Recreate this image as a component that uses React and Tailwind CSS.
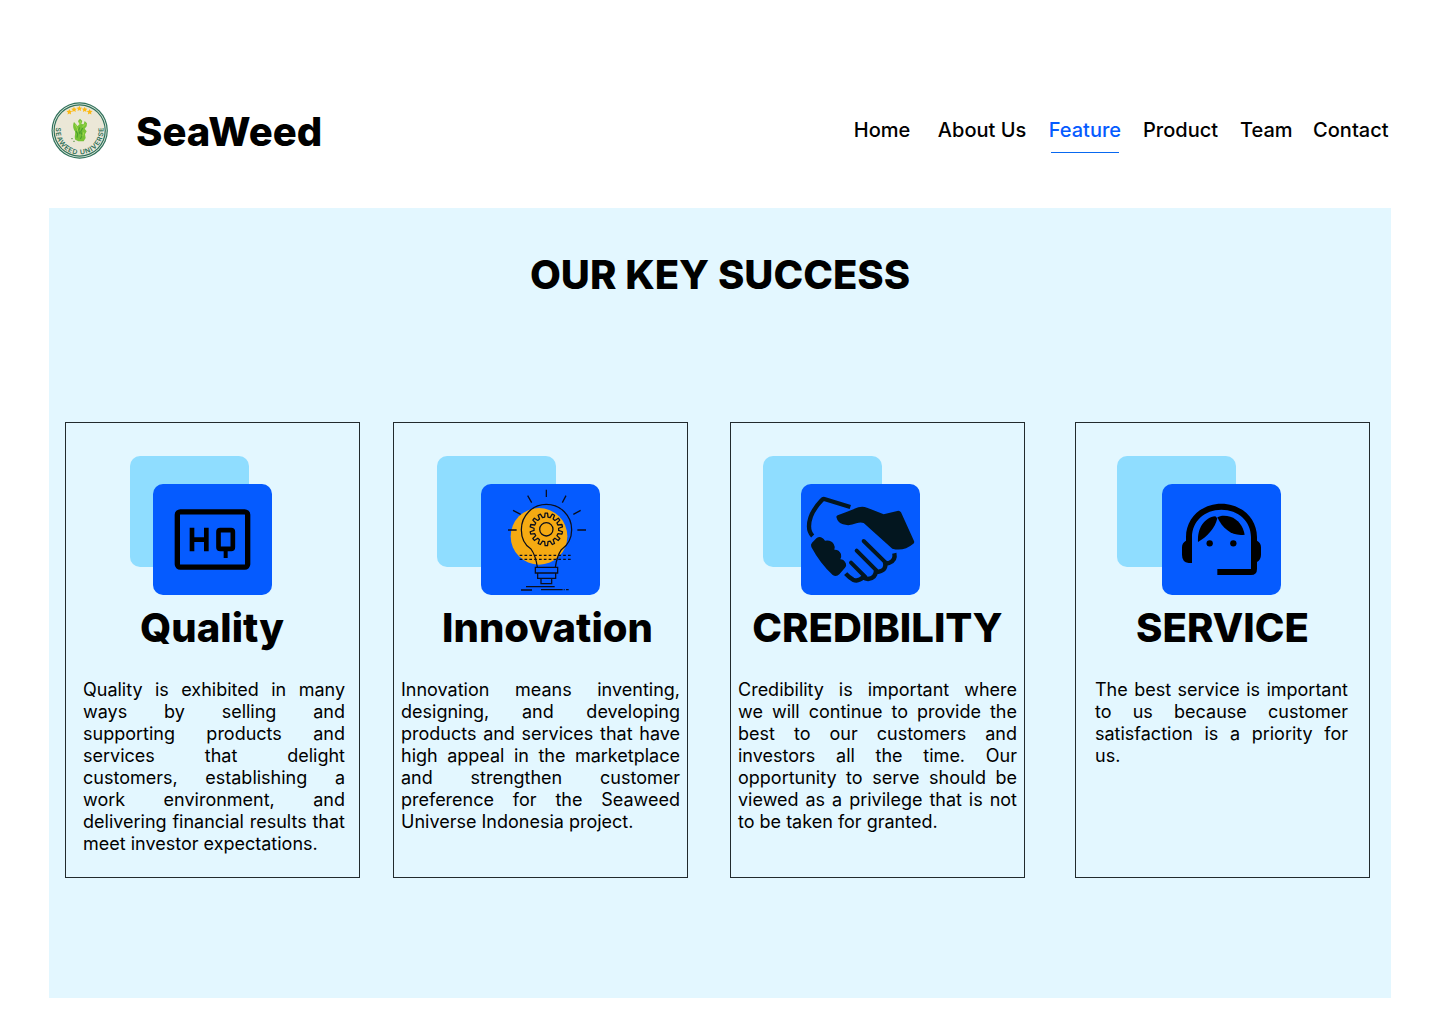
import React from "react";

const NAV = [
  { label: "Home", spacing: "ml-0" },
  { label: "About Us", spacing: "ml-[27.5px]" },
  { label: "Feature", spacing: "ml-[22.5px]", active: true },
  { label: "Product", spacing: "ml-[22px]" },
  { label: "Team", spacing: "ml-[22px]" },
  { label: "Contact", spacing: "ml-[20.5px]" },
];

function star(cx, cy, r) {
  return Array.from({ length: 10 }, (_, i) => {
    const a = -Math.PI / 2 + (i * Math.PI) / 5;
    const q = i % 2 ? r * 0.48 : r;
    return `${(cx + q * Math.cos(a)).toFixed(1)},${(cy + q * Math.sin(a)).toFixed(1)}`;
  }).join(" ");
}

function gear(cx, cy, outer, inner, teeth) {
  const pts = [];
  for (let i = 0; i < teeth; i++) {
    const base = -Math.PI / 2 + (i * 2 * Math.PI) / teeth;
    const step = (2 * Math.PI) / teeth;
    [[-0.3, inner], [-0.17, outer], [0.17, outer], [0.3, inner]].forEach(([o, r]) => {
      const a = base + o * step;
      pts.push(`${(cx + r * Math.cos(a)).toFixed(1)},${(cy + r * Math.sin(a)).toFixed(1)}`);
    });
  }
  return pts.join(" ");
}

function Logo() {
  return (
    <svg className="h-[60px] w-[60px] shrink-0" viewBox="30 27 180 180">
      <circle cx="119" cy="115.500" r="84.500" fill="#2e7059" />
      <circle cx="119" cy="115.500" r="81" fill="#e9eee4" />
      <circle cx="119" cy="115.500" r="78.500" fill="#2e7059" />
      <circle cx="119" cy="115.500" r="75" fill="#ebe7d7" />
      {[[88, 60], [102, 53], [118, 50], [134, 53], [149, 60]].map(([x, y]) => (
        <polygon key={x} points={star(x, y, 9)} fill="#fcb913" />
      ))}
      <path
        d="M106 143C102 133 107 128 105 118C100 111 97 101 102 90L108 97L113 103L118 96L114 87L120 80L127 87L124 96L131 97L134 87L141 94L140 103L134 110L140 118L135 127L137 138L131 148L115 148Z"
        fill="#78c236"
      />
      <path d="M111 137L113 126L108 117M121 141L127 130L122 119L128 108M119 106L116 115L120 126" fill="none" stroke="#4ca02d" strokeWidth="3.500" />
      <path d="M106 98L112 110L114 119M121 87L119 99M137 96L127 105M131 121L128 133" fill="none" stroke="#a6dc4d" strokeWidth="3" />
      <path d="M94 140h4M100 148h4" stroke="#4a8a39" strokeWidth="3" />
      <path id="seal-arc" d="M48.200 106A71.500 71.500 0 1 0 189.800 106" fill="none" />
      <text fill="#2e6f58" fontSize="20.500" fontWeight="600" fontFamily="Inter, sans-serif">
        <textPath href="#seal-arc" textLength="243" lengthAdjust="spacing">SEAWEED UNIVERSE</textPath>
      </text>
    </svg>
  );
}

function QualityIcon() {
  return (
    <svg className="h-full w-full" viewBox="84 102 357 333" fill="none" stroke="#000">
      <rect x="157" y="185.500" width="211" height="166" rx="9" strokeWidth="16" />
      <path d="M201 233V304M244 233V304M201 269H244" strokeWidth="14" />
      <rect x="280.500" y="240.500" width="43" height="56" rx="5" strokeWidth="14" />
      <path d="M302 300V324" strokeWidth="12" />
    </svg>
  );
}

function InnovationIcon() {
  return (
    <svg className="h-full w-full" viewBox="18 12 357 333" fill="none" stroke="#0b0e1c" strokeWidth="3.800">
      <circle cx="192" cy="169" r="85" fill="#f5aa12" stroke="none" />
      <path d="M214 29V51M158 47L170 68M273 47L262 68M114 91L137 103M317 91L295 103M99 150H125M307 150H333" />
      <path d="M187 262C184 240 178 221 168 207C148 194 139 171 139 149C139 107 173 73 214 73C256 73 290 107 290 149C290 174 279 195 259 209C250 222 244 241 241 262" />
      <polygon points={gear(214, 148, 49, 37, 14)} strokeLinejoin="round" />
      <circle cx="214" cy="148" r="20" />
      <path d="M134 226H291M134 238H291" strokeDasharray="8 6.500" />
      <path d="M181 262H248V279H181ZM188 279H242V295H188ZM198 295H230V311H198Z" />
      <path d="M153 320H239M138 330H171M198 329H263M266 329H269M273 329H281" />
    </svg>
  );
}

function CredibilityIcon() {
  return (
    <svg className="h-full w-full" viewBox="18 12 357 333" fill="none" stroke="#03161f">
      <path
        d="M128 106Q160 94 190 82Q203 78 216 83L266 103L310 92Q315 92 318 97L357 183Q359 188 355 191Q325 216 292 206L206 129Q196 126 184 130Q163 139 144 133Q128 128 124 111Q124 108 128 106Z"
        fill="#03161f"
        stroke="none"
      />
      <path d="M166 81L88 57Q84 56 80 61C54 88 42 112 42 139Q42 157 53 168" strokeWidth="13" />
      <path
        d="M49 201Q46 193 51 188L65 174Q78 165 90 182Q109 179 116 192Q121 200 118 209Q132 208 138 222Q140 231 136 238Q147 238 153 251Q155 257 150 263L133 283Q124 292 113 285Q75 250 49 201Z"
        fill="#03161f"
        stroke="none"
      />
      <path d="M206 183L269 245M185 212L244 271M168 248L211 291" strokeWidth="12" strokeLinecap="round" />
      <path d="M298 220Q303 242 282 249Q276 251 270 247Q276 269 252 275Q247 276 243 272Q242 295 219 297Q211 297 204 292Q190 306 174 299Q162 292 152 281" strokeWidth="13" strokeLinejoin="round" />
    </svg>
  );
}

function ServiceIcon() {
  return (
    <svg className="h-full w-full" viewBox="21 12 357 333" fill="#000">
      <path d="M111 249H101Q81 246 81 224V202Q81 188 93 182V171C93 114 140 71 199 71C258 71 306 114 306 171V182Q318 188 318 202V224Q318 238 306 246V267Q306 285 288 285H187V267H288V171C288 124 250 89 199 89C149 89 111 124 111 171Z" />
      <path d="M129 186C126 145 149 112 181 109L187 115C180 145 157 170 129 186Z" />
      <path d="M187 112C196 106 212 106 226 110C249 117 265 139 269 164C234 170 203 148 187 112Z" />
      <circle cx="164" cy="190" r="9.500" />
      <circle cx="235" cy="190" r="9.500" />
    </svg>
  );
}

const CARDS = [
  {
    title: "Quality",
    Icon: QualityIcon,
    place: "ml-4",
    back: "ml-16",
    front: "left-[87px]",
    heading: "pr-px",
    body: "ml-[17px] w-[262px]",
    text: "Quality is exhibited in many ways by selling and supporting products and services that delight customers, establishing a work environment, and delivering financial results that meet investor expectations.",
  },
  {
    title: "Innovation",
    Icon: InnovationIcon,
    place: "ml-[33px]",
    back: "ml-[43px]",
    front: "left-[87px]",
    heading: "pl-[14px]",
    body: "ml-[7px] w-[279px]",
    text: "Innovation means inventing, designing, and developing products and services that have high appeal in the marketplace and strengthen customer preference for the Seaweed Universe Indonesia project.",
  },
  {
    title: "CREDIBILITY",
    Icon: CredibilityIcon,
    place: "ml-[42px]",
    back: "ml-8",
    front: "left-[70px]",
    heading: "",
    body: "ml-[7px] w-[279px]",
    text: "Credibility is important where we will continue to provide the best to our customers and investors all the time. Our opportunity to serve should be viewed as a privilege that is not to be taken for granted.",
  },
  {
    title: "SERVICE",
    Icon: ServiceIcon,
    place: "ml-[50px]",
    back: "ml-[41px]",
    front: "left-[86px]",
    heading: "",
    body: "ml-[19px] w-[253px]",
    text: "The best service is important to us because customer satisfaction is a priority for us.",
  },
];

function Card({ title, Icon, place, back, front, heading, body, text }) {
  return (
    <article className={`h-[456px] w-[295px] shrink-0 border border-[#222a2d] ${place}`}>
      <div className="relative h-[181px] pt-[33px]">
        <div className={`h-[111px] w-[119px] rounded-[10px] bg-[#8fddff] ${back}`} />
        <div className={`absolute top-[61px] h-[111px] w-[119px] overflow-hidden rounded-[10px] bg-[#055bff] ${front}`}>
          <Icon />
        </div>
      </div>
      <h2 className={`whitespace-nowrap text-center text-[40px] leading-[48px] font-extrabold ${heading}`}>{title}</h2>
      <p className={`mt-[27px] text-justify text-[18px] leading-[22px] ${body}`}>{text}</p>
    </article>
  );
}

export default function App() {
  return (
    <div className="h-[1024px] w-[1440px] overflow-hidden bg-white font-['Inter',sans-serif] text-black">
      <header className="flex h-[208px] items-start pt-[101px] pr-[51.5px] pl-[50px]">
        <Logo />
        <span className="mt-[7px] ml-[26px] text-[40px] leading-[48px] font-extrabold">SeaWeed</span>
        <nav className="mt-[17px] ml-auto flex text-[20px] leading-6 font-medium">
          {NAV.map(({ label, spacing, active }) => (
            <a key={label} className={`flex flex-col items-center whitespace-nowrap ${spacing} ${active ? "text-[#055bff]" : ""}`}>
              {label}
              {active && <span className="mt-[10px] h-px w-[68px] bg-[#0868f0]" />}
            </a>
          ))}
        </nav>
      </header>
      <main className="mx-[49px] h-[790px] bg-[#e3f7ff] pt-[43px]">
        <h1 className="text-center text-[40px] leading-[48px] font-extrabold">OUR KEY SUCCESS</h1>
        <section className="mt-[123px] flex">
          {CARDS.map((card) => (
            <Card key={card.title} {...card} />
          ))}
        </section>
      </main>
    </div>
  );
}
